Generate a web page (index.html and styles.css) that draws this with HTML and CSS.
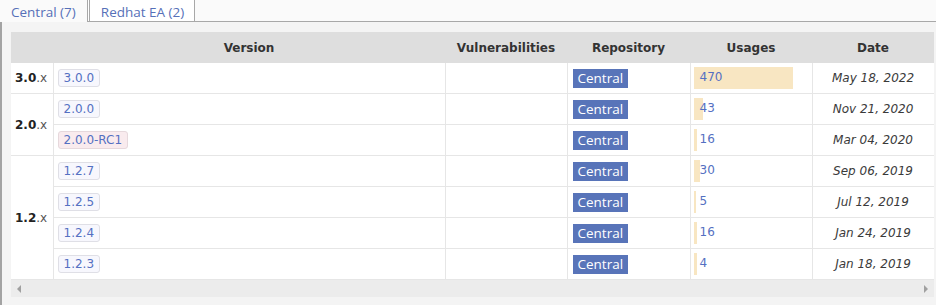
FILE: index.html
```html
<!DOCTYPE html>
<html>
<head>
<meta charset="utf-8">
<link rel="stylesheet" href="styles.css">
</head>
<body>
<div class="tabbar">
  <div class="tab active">Central (7)</div>
  <div class="tab">Redhat EA (2)</div>
  <div class="tabfill"></div>
</div>
<div class="panel">
  <div class="scrollwrap">
    <table class="grid">
      <colgroup>
        <col class="c-grp"><col class="c-ver"><col class="c-vul"><col class="c-repo"><col class="c-use"><col class="c-date">
      </colgroup>
      <thead>
        <tr>
          <th></th><th>Version</th><th>Vulnerabilities</th><th>Repository</th><th>Usages</th><th>Date</th>
        </tr>
      </thead>
      <tbody>
        <tr>
          <td class="grp"><b>3.0</b>.x</td>
          <td class="ver"><span class="vb">3.0.0</span></td>
          <td></td>
          <td class="repo"><span class="rb">Central</span></td>
          <td class="use"><div class="bar" style="width:99px"></div><span class="num">470</span></td>
          <td class="date">May 18, 2022</td>
        </tr>
        <tr>
          <td class="grp" rowspan="2"><b>2.0</b>.x</td>
          <td class="ver"><span class="vb">2.0.0</span></td>
          <td></td>
          <td class="repo"><span class="rb">Central</span></td>
          <td class="use"><div class="bar" style="width:9px"></div><span class="num">43</span></td>
          <td class="date">Nov 21, 2020</td>
        </tr>
        <tr>
          <td class="ver"><span class="vb rc">2.0.0-RC1</span></td>
          <td></td>
          <td class="repo"><span class="rb">Central</span></td>
          <td class="use"><div class="bar" style="width:3px"></div><span class="num">16</span></td>
          <td class="date">Mar 04, 2020</td>
        </tr>
        <tr>
          <td class="grp" rowspan="4"><b>1.2</b>.x</td>
          <td class="ver"><span class="vb">1.2.7</span></td>
          <td></td>
          <td class="repo"><span class="rb">Central</span></td>
          <td class="use"><div class="bar" style="width:6px"></div><span class="num">30</span></td>
          <td class="date">Sep 06, 2019</td>
        </tr>
        <tr>
          <td class="ver"><span class="vb">1.2.5</span></td>
          <td></td>
          <td class="repo"><span class="rb">Central</span></td>
          <td class="use"><div class="bar" style="width:2px"></div><span class="num">5</span></td>
          <td class="date">Jul 12, 2019</td>
        </tr>
        <tr>
          <td class="ver"><span class="vb">1.2.4</span></td>
          <td></td>
          <td class="repo"><span class="rb">Central</span></td>
          <td class="use"><div class="bar" style="width:3px"></div><span class="num">16</span></td>
          <td class="date">Jan 24, 2019</td>
        </tr>
        <tr>
          <td class="ver"><span class="vb">1.2.3</span></td>
          <td></td>
          <td class="repo"><span class="rb">Central</span></td>
          <td class="use"><div class="bar" style="width:3px"></div><span class="num">4</span></td>
          <td class="date">Jan 18, 2019</td>
        </tr>
      </tbody>
    </table>
    <div class="hscroll">
      <span class="arrow left"></span>
      <span class="arrow right"></span>
    </div>
  </div>
</div>
</body>
</html>
```

FILE: styles.css
```css
html, body {
  margin: 0;
  padding: 0;
  background: #ffffff;
}
body {
  font-family: "DejaVu Sans", Verdana, sans-serif;
  font-size: 12px;
  color: #333;
  width: 936px;
  height: 305px;
  overflow: hidden;
}
.tabbar {
  display: flex;
  height: 22px;
  background: #fafafa;
}
.tab {
  font-family: "Open Sans", "Noto Sans", sans-serif;
  font-size: 13.5px;
  color: #5670b8;
  line-height: 18px;
  padding: 3px 10px 0 11px;
  height: 18px;
  white-space: nowrap;
  background: #fff;
  border-left: 3px double #a8a8a8;
  border-right: 1px solid #a8a8a8;
  border-bottom: 1px solid #a8a8a8;
}
.tab.active {
  border: none;
  padding: 3px 11px 0 11px;
  height: 19px;
  background: #fafafa;
}
.tabfill {
  flex: 1;
  border-bottom: 1px solid #a8a8a8;
}
.panel {
  background: #f4f4f4;
  border-left: 2px solid #a3a3a3;
  padding: 10px 0 0 9px;
  height: 283px;
  box-sizing: border-box;
}
.scrollwrap {
  width: 923px;
  overflow: hidden;
}
.grid {
  border-collapse: collapse;
  table-layout: fixed;
  width: 923px;
  background: #fff;
}
.c-grp { width: 42px; }
.c-ver { width: 392px; }
.c-vul { width: 122px; }
.c-repo { width: 123px; }
.c-use { width: 122px; }
.c-date { width: 122px; }
.grid th {
  background: #dedede;
  height: 31px;
  padding: 0;
  font-weight: bold;
  font-size: 12px;
  color: #333;
  text-align: center;
}
.grid td {
  height: 30px;
  padding: 0;
  border-left: 1px solid #e6e6e6;
  border-right: 1px solid #e6e6e6;
  border-bottom: 1px solid #e6e6e6;
  vertical-align: middle;
  white-space: nowrap;
}
.grid td.grp {
  padding-left: 4px;
  color: #555;
  border-left: none;
}
.grp b {
  color: #222;
}
.ver {
  padding-left: 4px !important;
}
.vb {
  display: inline-block;
  padding: 1px 5px;
  line-height: 14px;
  border: 1px solid #dfdfe6;
  border-radius: 3px;
  background: #f7f7fd;
  color: #5470c2;
}
.vb.rc {
  background: #f9ebee;
  border-color: #e6d8dc;
}
.repo {
  padding-left: 5px !important;
}
.rb {
  display: inline-block;
  font-family: "Open Sans", "Noto Sans", sans-serif;
  font-size: 13.5px;
  line-height: 19px;
  padding: 0 5px 0 5px;
  background: #5874b9;
  color: #fff;
}
.use {
  position: relative;
  padding-left: 3px !important;
}
.bar {
  height: 22px;
  background: #f8e6c2;
}
.num {
  position: absolute;
  left: 9px;
  top: 7px;
  color: #5470c2;
  line-height: 14px;
}
.date {
  text-align: center;
  font-style: italic;
  color: #3a3a3a;
}
.hscroll {
  height: 17px;
  background: #ececec;
  display: flex;
  justify-content: space-between;
  align-items: center;
  padding: 0 6px;
}
.arrow {
  width: 0;
  height: 0;
  border-top: 4px solid transparent;
  border-bottom: 4px solid transparent;
}
.arrow.left {
  border-right: 4px solid #a0a0a0;
}
.arrow.right {
  border-left: 4px solid #a0a0a0;
}
```
